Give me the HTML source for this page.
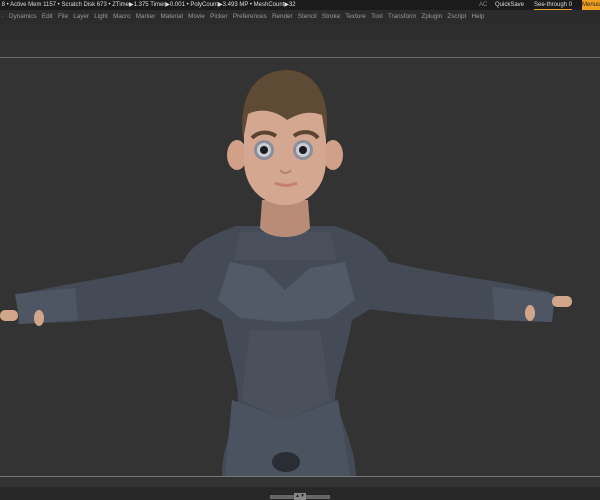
<!DOCTYPE html>
<html><head><style>
body{margin:0;width:600px;height:500px;overflow:hidden;background:#333;font-family:"Liberation Sans",sans-serif;}
.top{position:absolute;left:0;top:0;width:600px;height:10px;background:#1b1b1b;color:#ddd;font-size:6px;line-height:10px;white-space:nowrap}
.menu{position:absolute;left:0;top:10px;width:600px;height:14px;background:#2b2b2b;color:#999;font-size:6.3px;line-height:14px;white-space:nowrap}
.menu span{margin-right:5.2px}
.g1{position:absolute;left:0;top:24px;width:600px;height:16px;background:#2e2e2e}
.g2{position:absolute;left:0;top:40px;width:600px;height:17px;background:#323232}
</style></head><body>
<div class="top">&nbsp;8 • Active Mem 1157 • Scratch Disk 673 • ZTime▶1.375 Timer▶0.001 • PolyCount▶3.493 MP • MeshCount▶32
<span style="position:absolute;left:479px;color:#888">AC</span>
<span style="position:absolute;left:495px">QuickSave</span>
<span style="position:absolute;left:534px;top:0;height:9px;border-bottom:1px solid #e8a030;">See-through 0</span>
<span style="position:absolute;left:582px;top:0;width:18px;height:10px;background:#f0a020;color:#222">Menus</span></div>
<div class="menu">&nbsp;<span>·</span><span>Dynamics</span><span>Edit</span><span>File</span><span>Layer</span><span>Light</span><span>Macro</span><span>Marker</span><span>Material</span><span>Movie</span><span>Picker</span><span>Preferences</span><span>Render</span><span>Stencil</span><span>Stroke</span><span>Texture</span><span>Tool</span><span>Transform</span><span>Zplugin</span><span>Zscript</span><span>Help</span></div>
<div class="g1"></div><div class="g2"></div>
<div style="position:absolute;left:0;top:57px;width:600px;height:1px;background:#666"></div>
<div style="position:absolute;left:0;top:58px;width:600px;height:418px;background:#333"></div>
<svg style="position:absolute;left:0;top:0" width="600" height="500">
<!-- arms -->
<path d="M180,262 C130,274 80,282 60,286 L20,294 L18,324 L70,322 C120,318 170,314 230,305 Z" fill="#454b56"/>
<path d="M390,262 C440,274 490,280 510,284 L550,292 L552,322 L500,320 C450,318 400,314 340,305 Z" fill="#454b56"/>
<path d="M15,294 L75,288 L78,320 L20,324 Z" fill="#4f5663"/>
<path d="M492,287 L555,294 L552,322 L495,320 Z" fill="#4f5663"/>
<rect x="0" y="310" width="18" height="11" rx="5" fill="#d2a68a"/>
<ellipse cx="39" cy="318" rx="5" ry="8" fill="#d2a68a"/>
<rect x="552" y="296" width="20" height="11" rx="5" fill="#d2a68a"/>
<ellipse cx="530" cy="313" rx="5" ry="8" fill="#d2a68a"/>
<!-- torso -->
<path d="M236,226 L335,226 C360,235 385,245 392,270 C395,295 370,310 352,320 C345,360 335,380 335,400 C345,430 355,450 356,476 L222,476 C222,450 232,430 238,400 C238,380 228,350 222,320 C200,310 176,295 180,270 C186,245 212,235 236,226 Z" fill="#454b56"/>
<path d="M240,232 L330,232 L336,260 L234,260 Z" fill="#4a515d"/>
<path d="M230,262 L262,268 L285,290 L310,268 L345,262 L355,300 L330,318 L285,322 L240,318 L218,300 Z" fill="#525a67"/>
<path d="M250,330 L320,330 L330,400 L285,420 L242,400 Z" fill="#4a515d"/>
<path d="M232,400 L285,420 L338,400 L350,476 L225,476 Z" fill="#4c5360"/>
<ellipse cx="286" cy="462" rx="14" ry="10" fill="#2a2d33"/>
<!-- neck -->
<path d="M262,200 L308,200 L310,228 C300,240 270,240 260,228 Z" fill="#b88c77"/>
<!-- ears -->
<ellipse cx="237" cy="155" rx="10" ry="15" fill="#d0a089"/>
<ellipse cx="333" cy="155" rx="10" ry="15" fill="#d0a089"/>
<!-- face -->
<path d="M244,110 C244,90 326,90 326,110 L326,160 C326,190 305,205 285,205 C265,205 244,190 244,160 Z" fill="#d4a791"/>
<!-- hair -->
<path d="M243,140 C238,95 255,72 285,70 C315,70 332,95 326,140 L322,115 C308,110 298,114 287,120 C275,110 260,108 248,114 Z" fill="#5e4a35"/>
<!-- brows -->
<path d="M252,138 C260,130 270,132 276,136" stroke="#5a4330" stroke-width="4" fill="none"/>
<path d="M294,136 C300,131 312,130 318,138" stroke="#5a4330" stroke-width="4" fill="none"/>
<!-- eyes -->
<circle cx="264" cy="150" r="10" fill="#8c8f99"/><circle cx="264" cy="150" r="7" fill="#c9ccd2"/><circle cx="264" cy="150" r="4" fill="#1b1b1f"/>
<circle cx="303" cy="150" r="10" fill="#8c8f99"/><circle cx="303" cy="150" r="7" fill="#c9ccd2"/><circle cx="303" cy="150" r="4" fill="#1b1b1f"/>
<path d="M280,170 C283,174 288,174 291,170" stroke="#b5846f" stroke-width="2" fill="none"/>
<path d="M275,183 C282,186 290,186 297,183" stroke="#c58070" stroke-width="3" fill="none"/>
</svg>
<div style="position:absolute;left:0;top:476px;width:600px;height:1px;background:#777"></div>
<div style="position:absolute;left:0;top:477px;width:600px;height:10px;background:#333"></div>
<div style="position:absolute;left:0;top:487px;width:600px;height:13px;background:#272727"></div>
<div style="position:absolute;left:270px;top:495px;width:60px;height:4px;background:#666"></div>
<div style="position:absolute;left:294px;top:493px;width:12px;height:7px;background:#888;font-size:5px;color:#222;text-align:center">▲▼</div>
</body></html>
